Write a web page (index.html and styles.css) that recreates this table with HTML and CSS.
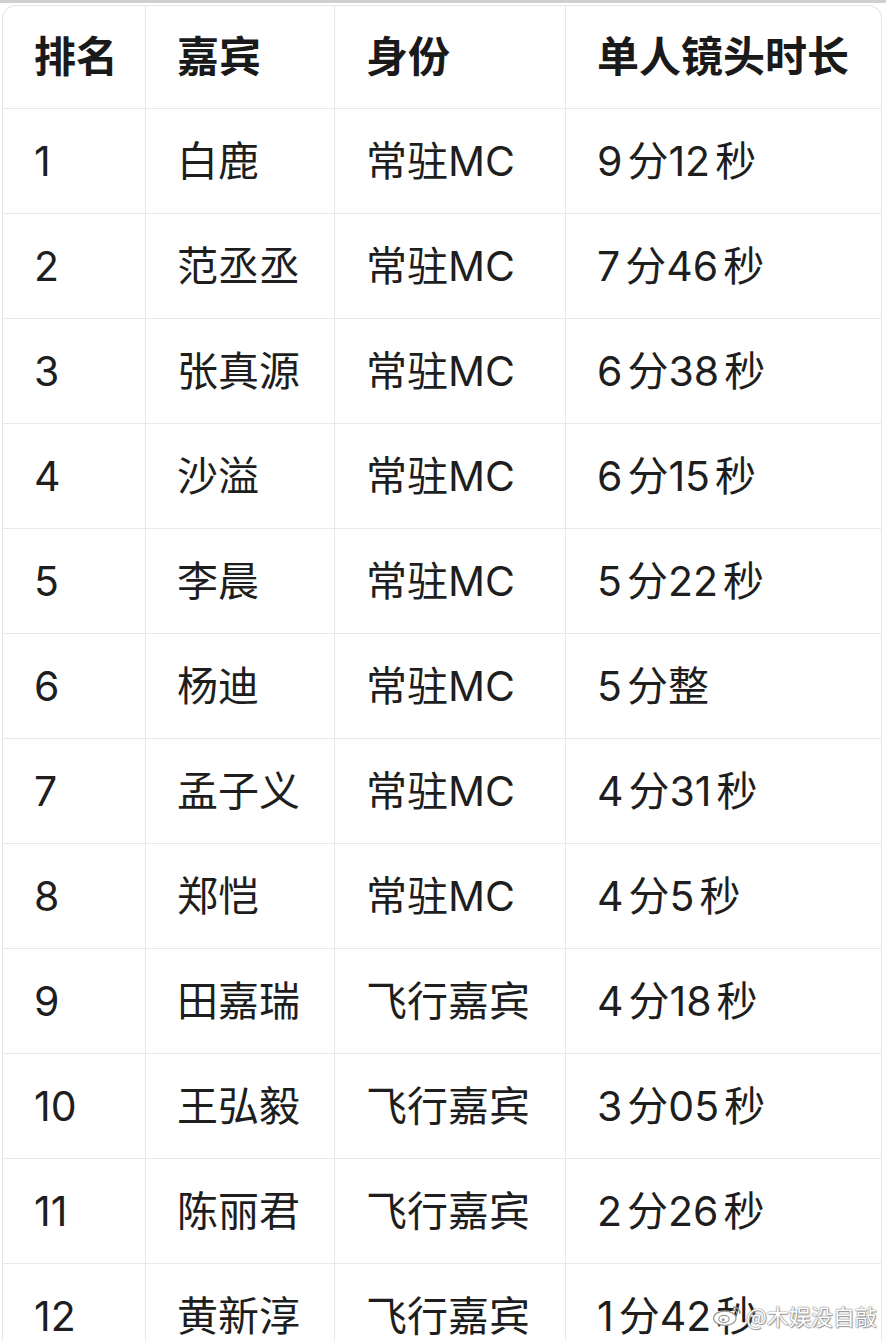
FILE: index.html
```html
<!DOCTYPE html>
<html lang="zh">
<head>
<meta charset="utf-8">
<title>单人镜头时长</title>
<link rel="stylesheet" href="styles.css">
</head>
<body>
<div class="topbar"></div>
<div class="frame">
  <table class="rank">
    <colgroup>
      <col class="c1"><col class="c2"><col class="c3"><col class="c4">
    </colgroup>
    <thead>
      <tr><th>排名</th><th>嘉宾</th><th>身份</th><th>单人镜头时长</th></tr>
    </thead>
    <tbody>
      <tr><td>1</td><td>白鹿</td><td>常驻MC</td><td><span class="n">9</span>分<span class="n">12</span>秒</td></tr>
      <tr><td>2</td><td>范丞丞</td><td>常驻MC</td><td><span class="n">7</span>分<span class="n">46</span>秒</td></tr>
      <tr><td>3</td><td>张真源</td><td>常驻MC</td><td><span class="n">6</span>分<span class="n">38</span>秒</td></tr>
      <tr><td>4</td><td>沙溢</td><td>常驻MC</td><td><span class="n">6</span>分<span class="n">15</span>秒</td></tr>
      <tr><td>5</td><td>李晨</td><td>常驻MC</td><td><span class="n">5</span>分<span class="n">22</span>秒</td></tr>
      <tr><td>6</td><td>杨迪</td><td>常驻MC</td><td><span class="n">5</span>分整</td></tr>
      <tr><td>7</td><td>孟子义</td><td>常驻MC</td><td><span class="n">4</span>分<span class="n">31</span>秒</td></tr>
      <tr><td>8</td><td>郑恺</td><td>常驻MC</td><td><span class="n">4</span>分<span class="n">5</span>秒</td></tr>
      <tr><td>9</td><td>田嘉瑞</td><td>飞行嘉宾</td><td><span class="n">4</span>分<span class="n">18</span>秒</td></tr>
      <tr><td>10</td><td>王弘毅</td><td>飞行嘉宾</td><td><span class="n">3</span>分<span class="n">05</span>秒</td></tr>
      <tr><td>11</td><td>陈丽君</td><td>飞行嘉宾</td><td><span class="n">2</span>分<span class="n">26</span>秒</td></tr>
      <tr><td>12</td><td>黄新淳</td><td>飞行嘉宾</td><td><span class="n">1</span>分<span class="n">42</span>秒</td></tr>
    </tbody>
  </table>
</div>
<div class="watermark">
  <svg class="wb" viewBox="0 0 40 32" width="32" height="26" aria-hidden="true">
    <ellipse cx="16" cy="20" rx="14" ry="9" fill="#fff" stroke="#9a9a9a" stroke-width="1.6"/>
    <ellipse cx="15" cy="21" rx="6.5" ry="4.5" fill="none" stroke="#9a9a9a" stroke-width="1.4"/>
    <circle cx="14" cy="22" r="1.8" fill="#9a9a9a"/>
    <path d="M27 6 A8 8 0 0 1 35 14" fill="none" stroke="#9a9a9a" stroke-width="1.8" stroke-linecap="round"/>
    <path d="M26 10 A4 4 0 0 1 31 14" fill="none" stroke="#9a9a9a" stroke-width="1.6" stroke-linecap="round"/>
  </svg>
  <span class="wm-text">@木娱没自敲</span>
</div>
</body>
</html>
```
FILE: styles.css
```css
html, body {
  margin: 0;
  padding: 0;
  background: #ffffff;
}
body {
  width: 886px;
  height: 1341px;
  overflow: hidden;
  position: relative;
  font-family: Inter, "Noto Sans CJK SC", "Noto Sans", sans-serif;
  color: #1c1c1e;
}
.topbar {
  height: 3px;
  background: #cfcfcf;
}
.frame {
  margin: 2px 4px 0 2px;
  border: 1.5px solid #e6e6e6;
  border-bottom: none;
  border-radius: 14px 14px 0 0;
  overflow: hidden;
}
.rank {
  width: 100%;
  border-collapse: separate;
  border-spacing: 0;
  table-layout: fixed;
}
.c1 { width: 143px; }
.c2 { width: 189px; }
.c3 { width: 231px; }
.c4 { width: auto; }
.rank th, .rank td {
  text-align: left;
  padding: 0 0 0 31px;
  line-height: 1;
  border-right: 1.5px solid #e9e9e9;
  border-bottom: 1.5px solid #e9e9e9;
  white-space: nowrap;
}
.rank th:last-child, .rank td:last-child {
  border-right: none;
}
.rank th {
  height: 102px;
  font-size: 42px;
  font-weight: 700;
  color: #1a1a1a;
}
.rank td {
  height: 104px;
  font-size: 41px;
  font-weight: 400;
  color: #1e1e1e;
}
.n {
  margin-right: 5px;
}
.watermark {
  position: absolute;
  left: 712px;
  top: 1302px;
  display: flex;
  align-items: center;
  gap: 2px;
}
.wm-text {
  font-family: "Noto Sans CJK SC", sans-serif;
  font-size: 22px;
  line-height: 1;
  color: #ffffff;
  text-shadow: 0 0 1px #7a7a7a, 0 0 2px #8a8a8a, 1px 1px 1px #a0a0a0;
}
```
